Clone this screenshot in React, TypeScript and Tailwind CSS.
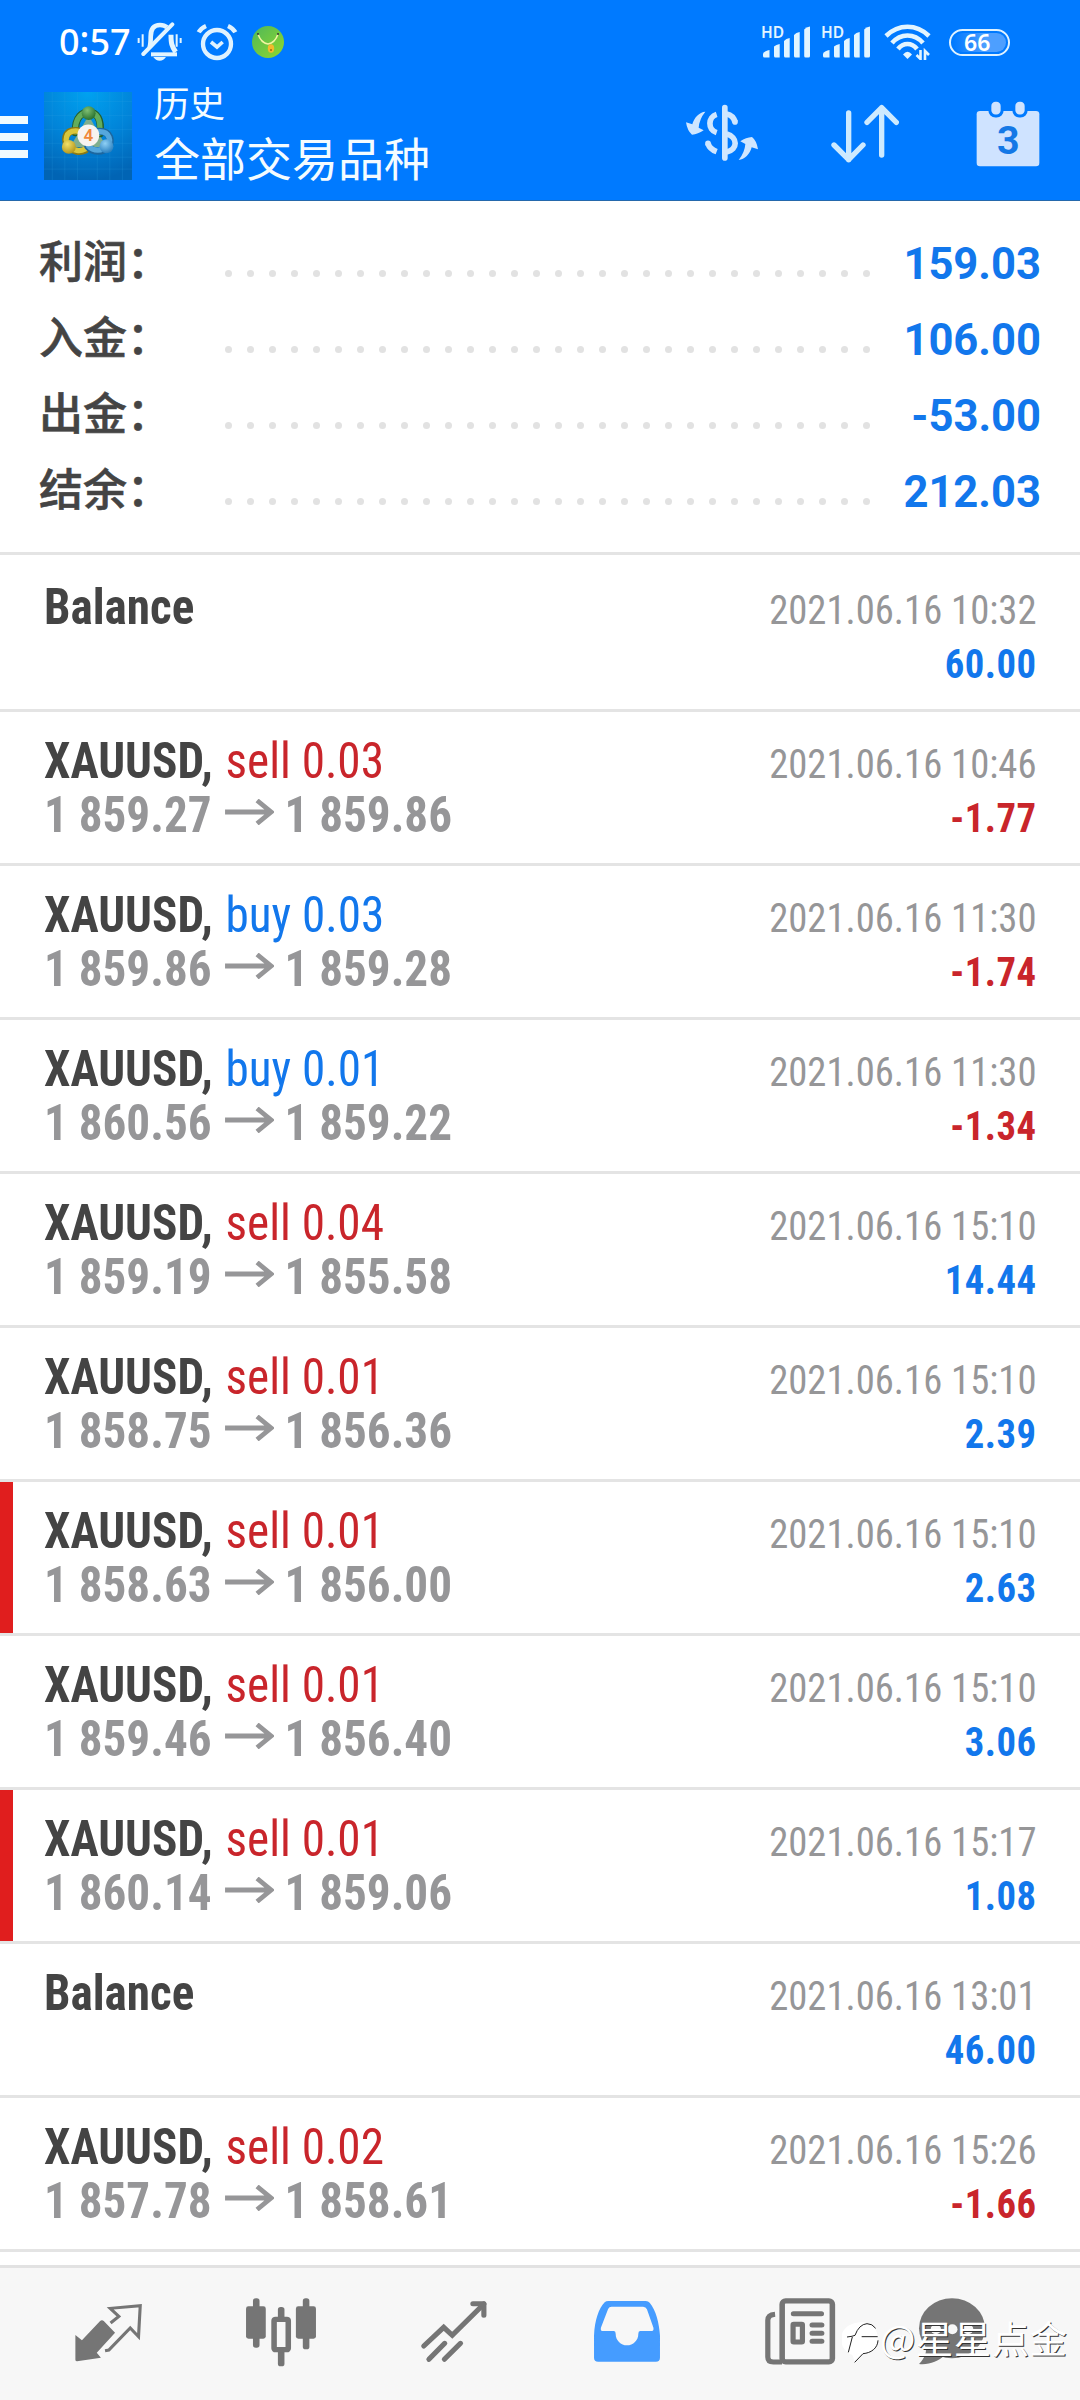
import React from "react";

const summary = [
  { label: "利润", value: "159.03" },
  { label: "入金", value: "106.00" },
  { label: "出金", value: "-53.00" },
  { label: "结余", value: "212.03" },
];

type Deal = {
  side?: "buy" | "sell";
  volume?: string;
  open?: string;
  close?: string;
  time: string;
  profit: string;
  marked?: boolean;
};

// a deal without a side is a balance operation
const deals: Deal[] = [
  { time: "10:32", profit: "60.00" },
  { side: "sell", volume: "0.03", open: "1 859.27", close: "1 859.86", time: "10:46", profit: "-1.77" },
  { side: "buy", volume: "0.03", open: "1 859.86", close: "1 859.28", time: "11:30", profit: "-1.74" },
  { side: "buy", volume: "0.01", open: "1 860.56", close: "1 859.22", time: "11:30", profit: "-1.34" },
  { side: "sell", volume: "0.04", open: "1 859.19", close: "1 855.58", time: "15:10", profit: "14.44" },
  { side: "sell", volume: "0.01", open: "1 858.75", close: "1 856.36", time: "15:10", profit: "2.39" },
  { side: "sell", volume: "0.01", open: "1 858.63", close: "1 856.00", time: "15:10", profit: "2.63", marked: true },
  { side: "sell", volume: "0.01", open: "1 859.46", close: "1 856.40", time: "15:10", profit: "3.06" },
  { side: "sell", volume: "0.01", open: "1 860.14", close: "1 859.06", time: "15:17", profit: "1.08", marked: true },
  { time: "13:01", profit: "46.00" },
  { side: "sell", volume: "0.02", open: "1 857.78", close: "1 858.61", time: "15:26", profit: "-1.66" },
];

const Signal: React.FC = () => (
  <svg className="w-[50px] h-[40px]" viewBox="0 -3 50 40" fill="#e3f5ff">
    <text x="0" y="12.500" fontSize="15.500" fontWeight="600" fontFamily="Noto Sans, sans-serif">
      HD
    </text>
    <path d="M2 28.5Q4 25.5 8.5 25V32.5H3.5Q2 32.5 2 31Z" />
    <path d="M13 21.5Q15 19.5 18.7 19V32.5H14.5Q13 32.5 13 31Z" />
    <path d="M23 16Q25 13.5 28.7 13V32.5H24.5Q23 32.5 23 31Z" />
    <path d="M33 10Q35 7.5 38.7 7V32.5H34.5Q33 32.5 33 31Z" />
    <path d="M43.2 4.5Q45 2 49 1.5V31Q49 32.5 47.5 32.5H44.7Q43.2 32.5 43.2 31Z" />
  </svg>
);

const StatusBar: React.FC = () => (
  <div className="flex items-center h-[84px] pl-[59px] text-white">
    <span className="flex w-[78px] font-['Noto_Sans',sans-serif] font-medium text-[36px] leading-[84px]">
      0<span className="-mt-[3px]">:</span>57
    </span>
    {/* muted bell */}
    <svg className="w-[46px] h-[40px]" viewBox="292 24 138 120" fill="none" stroke="#e3f5ff">
      <path d="M330 100Q333 90 333 68C333 42 345 33 361 33Q374 33 382 40" strokeWidth="14" />
      <path d="M394 62C394 88 396 96 408 114" strokeWidth="15" />
      <path d="M334 121H412" strokeWidth="12" />
      <path d="M311 120L398 31" strokeWidth="12" strokeLinecap="round" />
      <path d="M297 72V87M309 61V98M411 61V98M423 72V87" strokeWidth="6" />
      <path d="M341 129H379Q372 140 360 140Q348 140 341 129Z" fill="#e3f5ff" stroke="none" />
    </svg>
    <svg className="w-[42px] h-[38px] ml-[13px]" viewBox="467 22 126 114" fill="none" stroke="#dff2ff">
      <circle cx="530" cy="85" r="42" strokeWidth="13" />
      <path d="M512 79L530 94L547 79" strokeWidth="11" />
      <path d="M475 50Q481 38 497 31M585 50Q579 38 563 31" strokeWidth="13" />
    </svg>
    <svg className="w-[34px] h-[34px] ml-[13px]" viewBox="0 0 34 34">
      <defs>
        <linearGradient id="leaf" x1="0" y1="0" x2="1" y2="1">
          <stop offset="0" stopColor="#4fb85a" />
          <stop offset="1" stopColor="#8fd82c" />
        </linearGradient>
      </defs>
      <circle cx="17" cy="17" r="16" fill="url(#leaf)" />
      <path d="M7 9Q10 18 17 19Q24 18 27 9" fill="none" stroke="#f3f5a0" strokeWidth="1.500" />
      <circle cx="7" cy="9" r="1" fill="#333" />
      <circle cx="27" cy="9" r="1" fill="#333" />
      <ellipse cx="20" cy="23.500" rx="3.200" ry="4.200" fill="#f3ba2c" />
      <circle cx="20" cy="25" r="1" fill="#9a6a10" />
    </svg>
    <div className="flex items-center ml-auto mr-[70px]">
      <Signal />
      <div className="w-2.5" />
      <Signal />
      <svg className="w-[47px] h-[36px] ml-[13px]" viewBox="0 0 47 36" fill="none" stroke="#e3f5ff" strokeWidth="4.600">
        <path d="M2 12Q11.500 2.800 23.500 2.800Q35.500 2.800 45 12" />
        <path d="M8 19Q14.500 11.500 23.500 11.500Q32.500 11.500 39 19" />
        <path d="M14 25Q18 20 23.500 20Q29 20 33 25" />
        <path d="M19 30.500Q23.500 25 28 30.500L23.500 35Z" fill="#e3f5ff" stroke="none" />
        <path d="M36.500 26V35L32.500 31M41 36V27L45 31" strokeWidth="2.600" />
      </svg>
      <div className="flex items-center justify-center w-[61px] h-[27px] ml-[18px] rounded-full border-2 border-[#dff2ff] p-[2px]">
        <div className="w-full h-full rounded-full bg-[linear-gradient(90deg,#007aff_0%,#2a8cff_35%,#4d9fff_60%)] font-['Noto_Sans',sans-serif] font-semibold text-[23px] leading-[19px] pl-[11px]">
          66
        </div>
      </div>
    </div>
  </div>
);

const AppLogo: React.FC = () => (
  <svg className="w-[88px] h-[88px] ml-4" viewBox="11 229 266 266">
    <defs>
      <radialGradient id="sky" cx="0.5" cy="0" r="1">
        <stop offset="0" stopColor="#00a2f0" />
        <stop offset="0.55" stopColor="#0183d8" />
        <stop offset="1" stopColor="#0164b4" />
      </radialGradient>
      <radialGradient id="green" cx="0.4" cy="0.3" r="0.8">
        <stop offset="0" stopColor="#7fbf72" />
        <stop offset="1" stopColor="#1c6626" />
      </radialGradient>
      <radialGradient id="gold" cx="0.4" cy="0.3" r="0.8">
        <stop offset="0" stopColor="#f4e16a" />
        <stop offset="1" stopColor="#a98c12" />
      </radialGradient>
      <radialGradient id="azure" cx="0.4" cy="0.3" r="0.8">
        <stop offset="0" stopColor="#8fd0f5" />
        <stop offset="1" stopColor="#1b74b8" />
      </radialGradient>
    </defs>
    <rect x="11" y="229" width="266" height="266" fill="url(#sky)" />
    <path
      d="M36 229V495M74 229V495M112 229V495M172 229V495M210 229V495M248 229V495M11 258H277M11 300H277M11 342H277M11 384H277M11 426H277M11 462H277"
      stroke="#35a4e8"
      strokeOpacity="0.3"
      strokeWidth="2"
    />
    <path d="M146 300L90 395H200Z" fill="#7fae8e" />
    <g fill="none" strokeLinecap="round">
      <path d="M106 352C104 300 130 290 146 290C170 290 186 310 180 355" stroke="#245f2c" strokeWidth="22" />
      <path d="M106 350C104 301 130 291 146 291C170 291 184 310 179 353" stroke="#62ad5c" strokeWidth="16" />
      <path d="M112 346C72 342 68 380 88 396C98 408 120 412 136 404" stroke="#8b7814" strokeWidth="22" />
      <path d="M112 347C74 344 70 380 90 395C100 406 120 410 134 402" stroke="#d9c63c" strokeWidth="16" />
      <path d="M176 348C212 346 220 380 202 396C188 412 158 412 144 394" stroke="#1d679f" strokeWidth="22" />
      <path d="M178 349C210 348 217 380 200 394C188 408 160 409 146 393" stroke="#55a7dc" strokeWidth="16" />
    </g>
    <circle cx="146" cy="293" r="21" fill="url(#green)" />
    <circle cx="86" cy="395" r="21" fill="url(#gold)" />
    <circle cx="200" cy="393" r="21" fill="url(#azure)" />
    <circle cx="145" cy="360" r="33" fill="#f7f3f0" />
    <text x="145" y="378" textAnchor="middle" fontFamily="Roboto, sans-serif" fontWeight="600" fontSize="52" fill="#f0883a">
      4
    </text>
  </svg>
);

const Toolbar: React.FC = () => (
  <div className="flex h-[116px]">
    <div className="flex flex-col gap-[9px] w-7 pt-8">
      <div className="h-[8px] bg-[#f0faff]" />
      <div className="h-[8px] bg-[#f0faff]" />
      <div className="h-[8px] bg-[#f0faff]" />
    </div>
    <div className="pt-[8px]">
      <AppLogo />
    </div>
    <div className="ml-[22px] text-[#f4fcff] whitespace-nowrap">
      <div className="text-[35.500px] leading-[36px]">历史</div>
      <div className="text-[46px] leading-[50px] mt-[11px]">全部交易品种</div>
    </div>
    <div className="flex items-start ml-auto mr-[40px] pt-[17px]">
      <svg className="w-[72px] h-[60px] mt-[2px]" viewBox="18 40 216 180" fill="#cfe6ff">
        <path d="M134.500 54V205" stroke="#cfe6ff" strokeWidth="17" strokeLinecap="round" />
        <g fill="none" stroke="#cfe6ff" strokeWidth="17">
          <path d="M110 74C84 82 82 120 110 129" />
          <path d="M110 186Q89 178 84 161" />
          <path d="M84 161V162" strokeLinecap="round" />
          <path d="M140 73Q160 77 165 97" />
          <path d="M165 97V96" strokeLinecap="round" />
          <path d="M140 133C174 142 174 180 140 187" />
        </g>
        <path
          id="turn"
          d="M76 66C58 67 42 84 37 104L18 98Q22 124 36 135Q54 134 71 122L56 114Q58 88 76 66Z"
        />
        <use href="#turn" transform="rotate(180 126 138.500)" />
      </svg>
      <svg
        className="w-[68px] h-[60px] ml-[73px] mt-[3px]"
        viewBox="453 44 204 180"
        fill="none"
        stroke="#cdeaff"
        strokeWidth="16"
        strokeLinecap="round"
        strokeLinejoin="round"
      >
        <path d="M506 71V211M462 167L506 211L549 167" />
        <path d="M605 197V55M561 99L605 55L649 99" />
      </svg>
      <svg className="w-[64px] h-[66px] ml-[77px]" viewBox="888 34 192 198">
        <rect x="890" y="64" width="188" height="166" rx="10" fill="#cfe3ff" />
        <g fill="#cfe3ff" stroke="#007aff" strokeWidth="9">
          <rect x="929.500" y="32" width="37" height="47" rx="17" />
          <rect x="1001.500" y="32" width="37" height="47" rx="17" />
        </g>
        <text x="985" y="194" textAnchor="middle" fontFamily="Roboto, sans-serif" fontWeight="700" fontSize="118" fill="#1478e6">
          3
        </text>
      </svg>
    </div>
  </div>
);

const Summary: React.FC = () => (
  <div className="h-[351px] pt-[22px] pl-[39px] pr-[39px]">
    {summary.map((item) => (
      <div key={item.label} className="flex h-[76px] leading-[76px] text-[44px]">
        <div className="w-[186px] mt-[2px] font-medium text-[#444444] [-webkit-text-stroke:0.6px_#444444]">
          {item.label}：
        </div>
        <div className="flex gap-[15px] pt-[47px]">
          {Array.from({ length: 30 }, (_, i) => (
            <div key={i} className="w-[7px] h-[7px] rounded-full bg-[#e2e2e2]" />
          ))}
        </div>
        <div className="ml-auto mt-[3px] font-['Roboto',sans-serif] font-bold text-[#1277ec] origin-right scale-x-[0.99]">
          {item.value}
        </div>
      </div>
    ))}
  </div>
);

const DealRow: React.FC<{ deal: Deal }> = ({ deal }) => (
  <div className="flex h-[154px] border-b-[3px] border-[#e4e4e4]">
    <div className={deal.marked ? "w-[13px] bg-[#e01e1e]" : "w-[13px]"} />
    <div className="ml-[31px] pt-[22px] text-[50px] leading-[54px] font-bold origin-left scale-x-[0.943]">
      <div className="flex text-[#444444] whitespace-pre">
        {deal.side ? "XAUUSD, " : "Balance"}
        {deal.side && (
          <span className={deal.side === "sell" ? "ml-[2px] font-normal text-[#c9252b]" : "ml-[2px] font-normal text-[#1277ec]"}>
            {deal.side} {deal.volume}
          </span>
        )}
      </div>
      {deal.side && (
        <div className="flex items-center text-[#969698]">
          <span className="w-[192px]">{deal.open}</span>
          <svg
            className="w-[52px] h-[26px] mb-1.5"
            viewBox="0 0 49 26"
            preserveAspectRatio="none"
            fill="none"
            stroke="#969698"
            strokeWidth="4.800"
          >
            <path d="M0 13H46M32 1.500L46 13L32 24.500" />
          </svg>
          <span className="ml-[11px]">{deal.close}</span>
        </div>
      )}
    </div>
    <div className="ml-auto mr-[44px] pt-[25px] text-right text-[41px] leading-[54px] origin-right scale-x-[0.943]">
      <div className="text-[#969698]">2021.06.16 {deal.time}</div>
      <div
        className={
          deal.profit.startsWith("-")
            ? "font-bold tracking-[0.5px] text-[#c9252b]"
            : "font-bold tracking-[0.5px] text-[#1277ec]"
        }
      >
        {deal.profit}
      </div>
    </div>
  </div>
);

const BottomNav: React.FC = () => (
  <div className="relative flex h-[135px] pt-[29px] pl-[74px] bg-[#f7f7f7] border-t-[3px] border-[#e2e2e2]">
    <svg className="w-[69px] h-[70px]" viewBox="215 170 200 210" preserveAspectRatio="none" fill="#757575">
      <path d="M219 284L238 300L290 243Q296 237 302 243L334 277L281 337L293 352L224 363Q219 363 219 358Z" />
      <path d="M321 248L345 228L320 204L407 196L402 289L378 263L316 329L305 331" fill="none" stroke="#757575" strokeWidth="9" />
    </svg>
    <svg className="w-[72px] h-[70px] ml-[102px]" viewBox="712 170 208 210" preserveAspectRatio="none" fill="#757575">
      <rect x="735" y="174" width="19" height="148" rx="8" />
      <rect x="715" y="198" width="57" height="97" rx="7" />
      <rect x="879" y="174" width="19" height="153" rx="8" />
      <rect x="859" y="198" width="58" height="97" rx="7" />
      <rect x="807" y="200" width="19" height="178" rx="8" />
      <rect x="796" y="237" width="41" height="91" rx="4" fill="#f7f7f7" stroke="#757575" strokeWidth="16" />
    </svg>
    <svg
      className="w-[68px] h-[70px] ml-[103px]"
      viewBox="1219 170 198 210"
      preserveAspectRatio="none"
      fill="none"
      stroke="#757575"
      strokeWidth="15"
      strokeLinecap="round"
    >
      <path d="M1230 317L1288 261L1313 285L1405 191" />
      <path d="M1373 190H1405V225" strokeLinejoin="round" />
      <path d="M1245 357L1291 309M1290 357L1337 309" />
    </svg>
    <svg className="w-[68px] h-[70px] ml-[105px]" viewBox="155 170 198 210" preserveAspectRatio="none">
      <path
        fill="#459cff"
        fillRule="evenodd"
        d="M158 285C160 240 172 204 189 186Q193 182 200 182H309Q316 182 320 187C338 208 348 250 350 285V352Q350 364 338 364H170Q158 364 158 352ZM209 199Q202 199 199 206L178 262Q176 272 184 272H216Q221 272 221 280C221 300 236 315 254 315C272 315 287 300 287 280Q287 272 292 272H324Q333 272 331 262L312 207Q309 199 301 199Z"
      />
    </svg>
    <svg
      className="w-[72px] h-[70px] ml-[103px]"
      viewBox="653 170 208 210"
      preserveAspectRatio="none"
      fill="none"
      stroke="#757575"
      strokeWidth="15"
      strokeLinecap="round"
    >
      <rect x="705.500" y="181.500" width="145" height="183" rx="10" strokeWidth="16" />
      <path d="M685 222Q664 224 664 240V350Q664 365 680 365H705" strokeLinecap="butt" />
      <path d="M738 220H819M792 254H820M792 278.500H820M792 303H820" />
      <rect x="737" y="252" width="27" height="53" rx="2" />
    </svg>
    <svg className="w-[68px] h-[70px] ml-[82px]" viewBox="1100 170 198 210" preserveAspectRatio="none" fill="#757575">
      <ellipse cx="1199" cy="264" rx="96" ry="90" />
      <path d="M1118 310C1130 332 1120 352 1103 371C1132 374 1158 364 1178 345Z" />
      <g fill="#f7f7f7">
        <circle cx="1152" cy="267" r="15" />
        <circle cx="1200" cy="267" r="15" />
        <circle cx="1246" cy="267" r="15" />
      </g>
    </svg>
    {/* author stamp over the bar */}
    <div className="absolute left-[842px] top-[43px] flex items-center">
      <svg className="w-[38px] h-[44px] mt-2" viewBox="65 88 114 132" fill="none" stroke="#222" strokeWidth="3">
        <path d="M124 98A46 46 0 0 1 172 146C172 176 150 190 130 192L104 218L96 196A50 50 0 0 1 66 130A58 46 0 0 1 124 98Z" fill="#fff" stroke="none" />
        <path d="M80 142Q98 140 104 137Q116 104 140 102Q156 102 166 116M96 142L84 188M124 141H172M173 152C172 176 152 190 128 192L103 218" />
      </svg>
      <span className="text-[37.500px] leading-[50px] tracking-[0.4px] text-white whitespace-nowrap font-['Noto_Sans_CJK_SC',sans-serif] [text-shadow:1px_1px_0_#333]">
        @星星点金
      </span>
    </div>
  </div>
);

const App: React.FC = () => (
  <div className="w-[1080px] h-[2400px] flex flex-col bg-white overflow-hidden font-['Roboto_Condensed','Noto_Sans_CJK_SC',sans-serif]">
    <header className="h-[201px] bg-[#007aff] border-b border-[#2468ac] font-['Noto_Sans_CJK_SC',sans-serif]">
      <StatusBar />
      <Toolbar />
    </header>
    <Summary />
    <div className="flex-1 border-t-[3px] border-[#e4e4e4] pt-[3px]">
      {deals.map((deal, i) => (
        <DealRow key={i} deal={deal} />
      ))}
    </div>
    <BottomNav />
  </div>
);

export default App;
